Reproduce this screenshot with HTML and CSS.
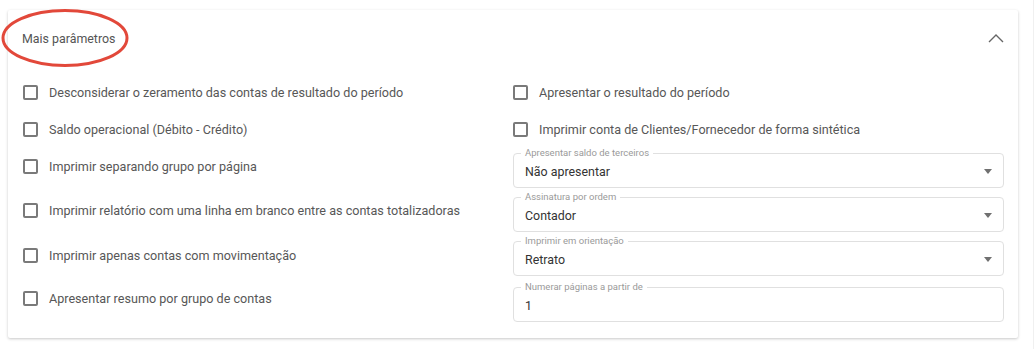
FILE: index.html
```html
<!DOCTYPE html>
<html lang="pt-BR">
<head>
    <meta charset="UTF-8">
    <meta name="viewport" content="width=device-width, initial-scale=1.0">
    <title>Mais parâmetros</title>
    <link rel="stylesheet" href="styles.css">
</head>
<body>
    <div class="page">
        <section class="panel">
            <div class="panel-header">
                <span class="panel-title">Mais parâmetros</span>
                <svg class="chevron" width="16" height="10" viewBox="0 0 16 10">
                    <path d="M1 9 L8 2 L15 9" fill="none" stroke="#666" stroke-width="1.4"/>
                </svg>
                <!-- annotation mark -->
                <svg class="mark" width="132" height="62" viewBox="0 0 132 62">
                    <ellipse cx="64" cy="30" rx="62" ry="27.5" fill="none" stroke="#e2483a" stroke-width="3"/>
                </svg>
            </div>

            <div class="panel-body">
                <label class="check"><span class="box"></span>Desconsiderar o zeramento das contas de resultado do período</label>
                <label class="check"><span class="box"></span>Apresentar o resultado do período</label>

                <label class="check"><span class="box"></span>Saldo operacional (Débito - Crédito)</label>
                <label class="check"><span class="box"></span>Imprimir conta de Clientes/Fornecedor de forma sintética</label>

                <label class="check low"><span class="box"></span>Imprimir separando grupo por página</label>
                <div class="field">
                    <span class="legend">Apresentar saldo de terceiros</span>
                    <span class="value">Não apresentar</span>
                    <span class="caret"></span>
                </div>

                <label class="check low"><span class="box"></span>Imprimir relatório com uma linha em branco entre as contas totalizadoras</label>
                <div class="field">
                    <span class="legend">Assinatura por ordem</span>
                    <span class="value">Contador</span>
                    <span class="caret"></span>
                </div>

                <label class="check low"><span class="box"></span>Imprimir apenas contas com movimentação</label>
                <div class="field">
                    <span class="legend">Imprimir em orientação</span>
                    <span class="value">Retrato</span>
                    <span class="caret"></span>
                </div>

                <label class="check low"><span class="box"></span>Apresentar resumo por grupo de contas</label>
                <div class="field">
                    <span class="legend">Numerar páginas a partir de</span>
                    <span class="value">1</span>
                </div>
            </div>
        </section>
    </div>
</body>
</html>
```

FILE: styles.css
```css
* {
    margin: 0;
    padding: 0;
    box-sizing: border-box;
}

body {
    font-family: Roboto, "Liberation Sans", sans-serif;
    background: #fff;
    color: #555;
}

.page {
    width: 1034px;
    height: 349px;
    padding: 10px 16px 0 8px;
    border-right: 1px solid #f0f0f0;
}

.panel {
    width: 1010px;
    height: 328px;
    background: #fff;
    border-radius: 2px;
    box-shadow: 0 1px 3px rgba(0, 0, 0, 0.22);
}

.panel-header {
    position: relative;
    height: 56px;
    padding: 0 14px;
    display: flex;
    align-items: center;
    justify-content: space-between;
}

.panel-title {
    font-size: 12.4px;
    color: #555;
}

.mark {
    position: absolute;
    left: -7px;
    top: -2px;
}

.panel-body {
    display: grid;
    grid-template-columns: 490px 491px;
    grid-template-rows: 37px 37px 44px 44px 46px 40px;
    padding: 8px 14px 16px 15px;
}

.check {
    display: flex;
    align-items: center;
    font-size: 12.6px;
    color: #575757;
    cursor: pointer;
}

.check.low {
    padding-bottom: 8px;
}

.box {
    width: 15px;
    height: 15px;
    border: 2px solid #7a7a7a;
    border-radius: 2px;
    margin-right: 11px;
    flex-shrink: 0;
}

.field {
    position: relative;
    margin-top: 5px;
    height: 35px;
    border: 1px solid #e0e0e0;
    border-radius: 4px;
    display: flex;
    align-items: center;
    padding: 2px 11px 0;
}

.legend {
    position: absolute;
    left: 7px;
    top: -7px;
    padding: 0 4px;
    background: #fff;
    font-size: 9.5px;
    color: #9a9a9a;
    line-height: 12px;
}

.value {
    flex: 1;
    font-size: 12.4px;
    color: #333;
}

.caret {
    width: 0;
    height: 0;
    border-left: 4.5px solid transparent;
    border-right: 4.5px solid transparent;
    border-top: 5px solid #707070;
}
```
